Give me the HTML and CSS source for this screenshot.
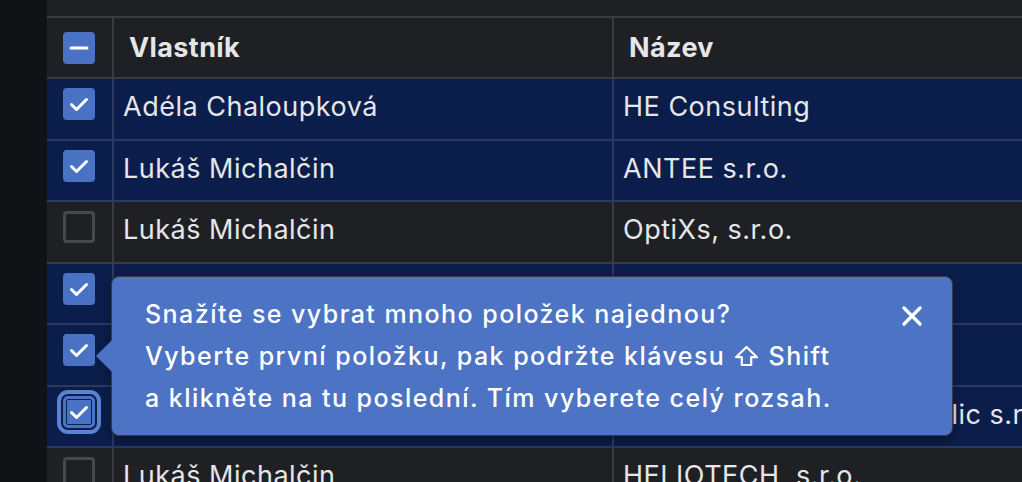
FILE: index.html
```html
<!DOCTYPE html>
<html lang="cs">
<head>
<meta charset="utf-8">
<title>Tabulka</title>
<link rel="stylesheet" href="styles.css">
</head>
<body>
<div class="app">
  <aside class="rail"></aside>
  <main class="table-wrap">
    <div class="topbar"></div>
    <div class="table">
      <div class="row head">
        <div class="cell sel"><span class="cb on"><svg viewBox="0 0 32 32" width="32" height="32"><path d="M8 16H24" stroke="#fff" stroke-width="3" stroke-linecap="round"/></svg></span></div>
        <div class="cell txt">Vlastník</div>
        <div class="cell txt">Název</div>
      </div>
      <div class="row selected">
        <div class="cell sel"><span class="cb on"><svg viewBox="0 0 32 32" width="32" height="32"><path d="M8.5 16.5L13.5 21.5L23.5 11.5" fill="none" stroke="#fff" stroke-width="3" stroke-linecap="round" stroke-linejoin="round"/></svg></span></div>
        <div class="cell txt">Adéla Chaloupková</div>
        <div class="cell txt">HE Consulting</div>
      </div>
      <div class="row selected">
        <div class="cell sel"><span class="cb on"><svg viewBox="0 0 32 32" width="32" height="32"><path d="M8.5 16.5L13.5 21.5L23.5 11.5" fill="none" stroke="#fff" stroke-width="3" stroke-linecap="round" stroke-linejoin="round"/></svg></span></div>
        <div class="cell txt">Lukáš Michalčin</div>
        <div class="cell txt">ANTEE s.r.o.</div>
      </div>
      <div class="row">
        <div class="cell sel"><span class="cb"></span></div>
        <div class="cell txt">Lukáš Michalčin</div>
        <div class="cell txt">OptiXs, s.r.o.</div>
      </div>
      <div class="row selected">
        <div class="cell sel"><span class="cb on"><svg viewBox="0 0 32 32" width="32" height="32"><path d="M8.5 16.5L13.5 21.5L23.5 11.5" fill="none" stroke="#fff" stroke-width="3" stroke-linecap="round" stroke-linejoin="round"/></svg></span></div>
        <div class="cell txt">Lukáš Michalčin</div>
        <div class="cell txt">Elektro s.r.o.</div>
      </div>
      <div class="row selected">
        <div class="cell sel"><span class="cb on"><svg viewBox="0 0 32 32" width="32" height="32"><path d="M8.5 16.5L13.5 21.5L23.5 11.5" fill="none" stroke="#fff" stroke-width="3" stroke-linecap="round" stroke-linejoin="round"/></svg></span></div>
        <div class="cell txt">Adéla Chaloupková</div>
        <div class="cell txt">Mont s.r.o.</div>
      </div>
      <div class="row selected">
        <div class="cell sel"><span class="cb on focus"><svg viewBox="0 0 32 32" width="32" height="32"><path d="M8.5 16.5L13.5 21.5L23.5 11.5" fill="none" stroke="#fff" stroke-width="3" stroke-linecap="round" stroke-linejoin="round"/></svg></span></div>
        <div class="cell txt">Lukáš Michalčin</div>
        <div class="cell txt">Gastro Centrum A Republic s.r.o.</div>
      </div>
      <div class="row">
        <div class="cell sel"><span class="cb"></span></div>
        <div class="cell txt">Lukáš Michalčin</div>
        <div class="cell txt">HELIOTECH, s.r.o.</div>
      </div>
    </div>

    <div class="tip" role="dialog">
      <p class="tip-text">Snažíte se vybrat mnoho položek najednou?<br>Vyberte první položku, pak podržte klávesu <svg class="shift" viewBox="0 0 25 22" width="25" height="22" aria-label="Shift"><path d="M12.5 2L23 12.2H17.2V20H7.8V12.2H2Z" fill="none" stroke="#fff" stroke-width="2.2" stroke-linejoin="round"/></svg> Shift<br>a klikněte na tu poslední. Tím vyberete celý rozsah.</p>
      <button class="tip-close" aria-label="Zavřít"><svg viewBox="0 0 20 20" width="20" height="20"><path d="M2 2L18 18M18 2L2 18" stroke="#fff" stroke-width="3.2" stroke-linecap="round"/></svg></button>
    </div>
  </main>
</div>
</body>
</html>
```

FILE: styles.css
```css
* { box-sizing: border-box; }

html, body {
  margin: 0;
  padding: 0;
  width: 1022px;
  height: 482px;
  overflow: hidden;
  background: #1f2024;
  font-family: Inter, "Noto Sans", "DejaVu Sans", sans-serif;
  color: #e5e6e8;
}

.app {
  display: flex;
  height: 482px;
}

.rail {
  width: 47px;
  flex: none;
  background: #111215;
}

.table-wrap {
  position: relative;
  flex: 1;
  background: #1f2024;
  overflow: hidden;
}

.topbar {
  height: 18px;
  border-bottom: 2px solid rgba(255, 255, 255, 0.13);
}

.table {
  display: flex;
  flex-direction: column;
}

.row {
  display: grid;
  grid-template-columns: 67px 500px 1fr;
  height: 61.5px;
  flex: none;
  border-bottom: 2px solid rgba(255, 255, 255, 0.13);
  background: #1f2024;
}

.row.head {
  height: 61px;
}

.row.selected {
  background: #0b1d4a;
}

.cell {
  border-right: 2px solid rgba(255, 255, 255, 0.13);
  white-space: nowrap;
  overflow: hidden;
}

.cell:last-child {
  border-right: none;
}

.sel {
  display: flex;
  justify-content: center;
  align-items: flex-start;
  padding-top: 9px;
  padding-right: 2px;
}

.head .sel {
  padding-top: 14px;
}

.txt {
  font-size: 27px;
  letter-spacing: 0.5px;
  line-height: 32px;
  padding: 12px 9px 0;
}

.head .txt {
  font-weight: 700;
  letter-spacing: 0.4px;
  padding: 13.5px 15px 0;
}

.cb {
  width: 32px;
  height: 32px;
  border-radius: 4px;
  border: 3px solid #47484e;
  display: block;
  flex: none;
}

.cb svg {
  display: block;
  margin: -3px;
}

.cb.on {
  background: #4a72c4;
  border-color: #4a72c4;
}

.cb.focus {
  box-shadow: inset 0 0 0 1px #0b1d4a, 0 0 0 2px #0b1d4a, 0 0 0 6px #5b82d2;
  border-radius: 5px;
}

.tip {
  position: absolute;
  left: 64px;
  top: 276px;
  width: 842px;
  height: 160px;
  background: #4d74c4;
  border: 1.5px solid #383a42;
  border-radius: 8px;
  box-shadow: 0 4px 12px rgba(0, 0, 0, 0.35);
  display: flex;
  align-items: flex-start;
  justify-content: space-between;
  padding: 16px 20px 0 33px;
}

.tip::before {
  content: "";
  position: absolute;
  left: -16px;
  top: 50%;
  margin-top: -16px;
  border-right: 16px solid #4d74c4;
  border-top: 16px solid transparent;
  border-bottom: 16px solid transparent;
}

.tip-text {
  margin: 0;
  font-size: 25px;
  letter-spacing: 1.45px;
  line-height: 42px;
  color: #ffffff;
  font-weight: 500;
  white-space: nowrap;
}

.shift {
  display: inline-block;
  vertical-align: -2px;
  margin: 0 1px;
}

.tip-close {
  background: none;
  border: none;
  padding: 0;
  margin: 13px 10px 0 0;
  width: 20px;
  height: 20px;
  cursor: pointer;
  flex: none;
}

.tip-close svg {
  display: block;
}
```
